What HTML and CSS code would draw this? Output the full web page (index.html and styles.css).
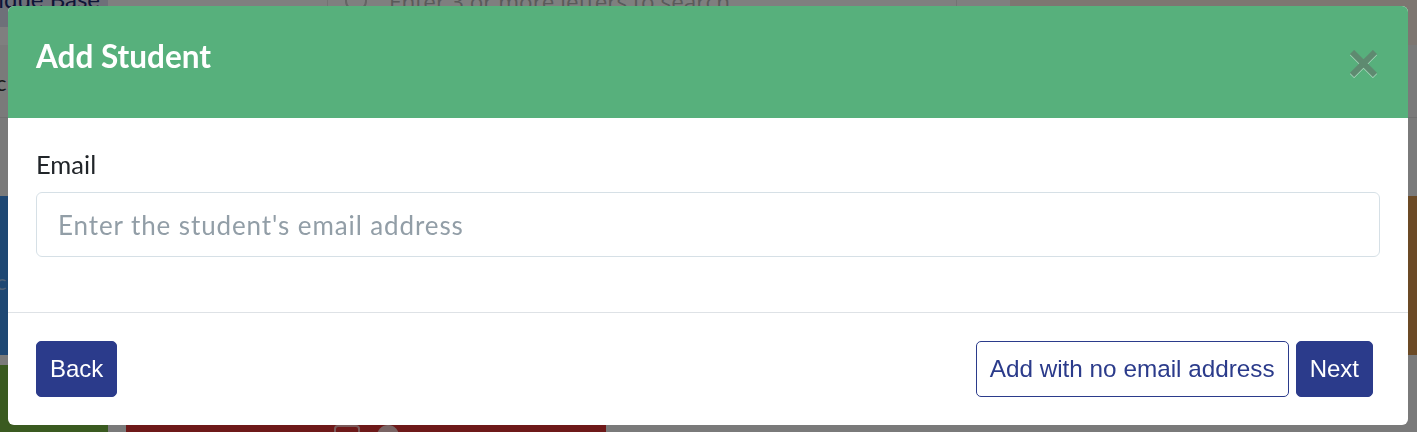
FILE: index.html
```html
<!DOCTYPE html>
<html lang="en">
<head>
    <meta charset="UTF-8">
    <meta name="viewport" content="width=device-width, initial-scale=1.0">
    <title>Add Student</title>
    <link rel="stylesheet" href="styles.css">
</head>
<body>
    <div class="page">
        <header class="topbar">
            <div class="brand"><span>Technique Base</span></div>
            <div class="spacer"></div>
            <div class="search">
                <span class="glass"></span>
                <span class="search-text">Enter 3 or more letters to search</span>
            </div>
            <div class="spacer small"></div>
            <div class="account"></div>
        </header>
        <nav class="subnav"><span>c</span></nav>
        <div class="tiles">
            <div class="tile blue"><span>c</span></div>
            <div class="tile blank"></div>
            <div class="tile orange"></div>
        </div>
        <div class="tiles second">
            <div class="tile green"></div>
            <div class="tile red">
                <span class="tile-icon square"></span>
                <span class="tile-icon dot"></span>
            </div>
            <div class="tile blank"></div>
        </div>
    </div>

    <div class="backdrop"></div>

    <div class="modal-wrap">
        <div class="modal">
            <div class="modal-header">
                <h2 class="modal-title">Add Student</h2>
                <button class="close" type="button" aria-label="Close">
                    <svg width="27" height="27" viewBox="0 0 27 27">
                        <path d="M2 2 L25 25 M25 2 L2 25" stroke="currentColor" stroke-width="6" fill="none"/>
                    </svg>
                </button>
            </div>
            <div class="modal-body">
                <div class="form-group">
                    <label for="email">Email</label>
                    <input type="text" id="email" placeholder="Enter the student's email address">
                </div>
            </div>
            <div class="modal-footer">
                <button class="btn btn-primary" type="button">Back</button>
                <div class="footer-right">
                    <button class="btn btn-outline" type="button">Add with no email address</button>
                    <button class="btn btn-primary" type="button">Next</button>
                </div>
            </div>
        </div>
    </div>
</body>
</html>
```

FILE: styles.css
```css
body {
    margin: 0;
    font-family: "Lato", "Open Sans", sans-serif;
    background: #fff;
    overflow: hidden;
}

/* page behind the dialog */
.page {
    height: 432px;
    overflow: hidden;
    background: #f4f4f4;
}
.topbar {
    display: flex;
    align-items: flex-start;
    height: 45px;
    background: #fff;
}
.brand {
    width: 108px;
    height: 27px;
    display: flex;
    justify-content: flex-end;
    overflow: hidden;
    background: #dde1f3;
}
.brand span {
    margin-top: -16px;
    font-size: 24px;
    color: #1c2a6e;
    white-space: nowrap;
    padding-right: 8px;
}
.spacer {
    width: 219px;
}
.spacer.small {
    width: 53px;
}
.search {
    width: 628px;
    height: 40px;
    display: flex;
    align-items: flex-start;
    gap: 22px;
    border-left: 1px solid #e6e6e6;
    border-right: 1px solid #e6e6e6;
    overflow: hidden;
}
.glass {
    width: 18px;
    height: 18px;
    margin: -10px 0 0 17px;
    border: 2px solid #c8c8c8;
    border-radius: 50%;
}
.search-text {
    margin-top: -14px;
    font-family: "Open Sans", sans-serif;
    font-size: 22.5px;
    color: #b4b4b4;
    white-space: nowrap;
}
.account {
    flex: 1;
    height: 45px;
    background: #fbede3;
}
.subnav {
    box-sizing: border-box;
    height: 73px;
    padding-top: 24px;
    border-bottom: 1px solid #e0e0e0;
}
.subnav span {
    display: block;
    margin-left: -4px;
    font-size: 22px;
    color: #333;
}
.tiles {
    display: grid;
    grid-template-columns: 600px 1fr 600px;
    gap: 10px;
    margin-top: 78px;
    height: 159px;
}
.tiles.second {
    grid-template-columns: 108px 480px 1fr;
    gap: 18px;
    margin-top: 10px;
    height: 67px;
}
.tile.blue {
    box-sizing: border-box;
    padding-top: 72px;
    background: #3d8fe6;
}
.tile.blue span {
    display: block;
    margin-left: -4px;
    font-size: 22px;
    color: #9cc4f0;
}
.tile.orange {
    background: #d6944a;
}
.tile.green {
    background: #74b440;
}
.tile.red {
    display: flex;
    gap: 17px;
    padding: 60px 0 0 208px;
    background: #dc3232;
}
.tile-icon.square {
    width: 22px;
    height: 18px;
    border: 2px solid #f5b5b5;
    border-radius: 4px;
}
.tile-icon.dot {
    width: 22px;
    height: 22px;
    border-radius: 50%;
    background: #f5c8c8;
}

/* dialog */
.backdrop {
    position: fixed;
    inset: 0;
    background: rgba(0, 0, 0, 0.5);
}
.modal-wrap {
    position: fixed;
    inset: 0;
    padding: 6px 9px 0 8px;
}
.modal {
    background: #fff;
    border-radius: 6px;
    overflow: hidden;
}
.modal-header {
    display: flex;
    align-items: flex-start;
    justify-content: space-between;
    padding: 28px 31px 28px 28px;
    background: #57b07c;
}
.modal-title {
    margin: 0;
    padding-top: 3px;
    font-size: 31.5px;
    font-weight: 700;
    line-height: 39px;
    color: #fff;
}
.close {
    padding: 16px 0 13px;
    border: none;
    background: none;
    color: #666;
    opacity: 0.5;
    filter: drop-shadow(0 1px 0 #fff);
    cursor: pointer;
}
.close svg {
    display: block;
}
.modal-body {
    padding: 28px;
}
.form-group {
    margin-bottom: 27px;
}
label {
    display: block;
    margin-bottom: 10px;
    font-size: 25.5px;
    line-height: 36px;
    color: #212529;
}
input {
    box-sizing: border-box;
    width: 100%;
    height: 65px;
    padding: 0 21px;
    border: 1px solid #d6e0e6;
    border-radius: 6px;
    font-family: "Lato", sans-serif;
    font-size: 26px;
    letter-spacing: 0.9px;
    color: #212529;
}
input::placeholder {
    color: #929ea7;
}
.modal-footer {
    display: flex;
    justify-content: space-between;
    align-items: center;
    padding: 28px 35px 28px 28px;
    border-top: 1px solid #dee2e6;
}
.footer-right {
    display: flex;
    gap: 7px;
}
.btn {
    height: 56px;
    padding: 0 13px;
    border-radius: 5px;
    font-family: "Liberation Sans", Arial, sans-serif;
    font-size: 24px;
    cursor: pointer;
}
.btn-primary {
    border: 1px solid #2b3b8b;
    background: #2b3b8b;
    color: #fff;
}
.btn-outline {
    border: 1px solid #2b3b8b;
    background: #fff;
    color: #2b3b8b;
    font-size: 24.3px;
}
```
